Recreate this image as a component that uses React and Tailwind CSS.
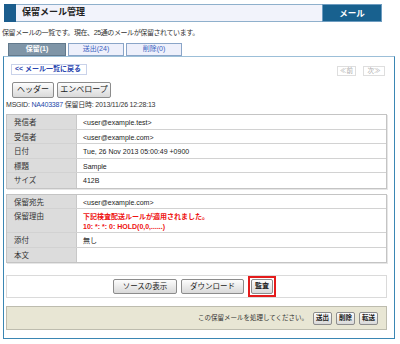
import React from "react";

const FONT = "font-['Liberation_Sans','Noto_Sans_CJK_JP',sans-serif]";

const BTN =
  "flex items-center justify-center rounded-[2px] border border-[#8c8c8c] bg-gradient-to-b from-[#fdfdfd] to-[#d9d9d9] text-[#222]";

const HEADERS = [
  ["発信者", "<user@example.test>"],
  ["受信者", "<user@example.com>"],
  ["日付", "Tue, 26 Nov 2013 05:00:49 +0900"],
  ["標題", "Sample"],
  ["サイズ", "412B"],
];

function Row({ label, children, h = "h-[14.5px]", last }) {
  return (
    <div className={`flex ${h} ${last ? "" : "border-b border-[#d2d2d2]"}`}>
      <div className="w-[70px] shrink-0 bg-[#dcdcdc] border-r border-[#c8c8c8] pl-[7px] pt-[3px] text-[7.5px] leading-[9px] text-[#333]">
        {label}
      </div>
      <div className="flex-1 bg-white pl-[6px] pt-[3px] text-[7px] leading-[9px] text-[#222]">{children}</div>
    </div>
  );
}

export default function App() {
  return (
    <div className={`w-[400px] h-[344px] bg-white overflow-hidden ${FONT}`}>
      {/* title bar */}
      <div className="mt-[4px] ml-[4px] flex h-[18px] w-[378px]">
        <div className="w-[12px] bg-[#1b5d8d]" />
        <div className="flex-1 flex items-center bg-[#f2f3fb] border-y border-[#8fb0cc] pl-[6px] text-[9px] font-bold text-[#222]">
          保留メール管理
        </div>
        <div className="w-[60px] flex items-center justify-center bg-[#18618f] border border-[#6d9cc0] text-[8.5px] font-bold text-white">
          メール
        </div>
      </div>

      <div className="mt-[6px] ml-[2px] text-[7px] leading-[9px] tracking-[-0.4px] text-[#333]">
        保留メールの一覧です。現在、25通のメールが保留されています。
      </div>

      {/* tabs */}
      <div className="mt-[6px] ml-[8px] flex gap-[2px] h-[13px] text-[7px]">
        <div className="w-[58px] flex items-center justify-center bg-[#7f95a7] border border-[#62798c] text-white font-bold">
          保留(1)
        </div>
        <div className="w-[56px] flex items-center justify-center bg-[#eef0fb] border border-[#8aa5c8] text-[#3a5fc0]">
          送出(24)
        </div>
        <div className="w-[56px] flex items-center justify-center bg-[#eef0fb] border border-[#8aa5c8] text-[#3a5fc0]">
          削除(0)
        </div>
      </div>

      {/* main box */}
      <div className="ml-[3px] w-[392px] h-[283px] border border-[#3a86b3] border-t-[#9cbfd8]">
        <div className="flex justify-between pt-[7px] pl-[7px] pr-[9px]">
          <div className="h-[11px] w-[76px] flex items-center border border-[#c9d2ea] px-[3px] text-[7px] font-bold text-[#2a45b0]">
            &lt;&lt; メール一覧に戻る
          </div>
          <div className="flex gap-[7px] mt-[2px]">
            <div className="h-[10px] w-[19px] flex items-center justify-center border border-[#dedede] text-[6.5px] text-[#aaa]">
              ≪前
            </div>
            <div className="h-[10px] w-[22px] flex items-center justify-center border border-[#dedede] text-[6.5px] text-[#aaa]">
              次≫
            </div>
          </div>
        </div>

        <div className="mt-[6px] ml-[8px] flex gap-[3px]">
          <div className={`${BTN} h-[16px] w-[42px] text-[8px]`}>ヘッダー</div>
          <div className={`${BTN} h-[16px] w-[54px] text-[8px]`}>エンベロープ</div>
        </div>

        <div className="mt-[2px] ml-[2px] text-[7px] leading-[9px] text-[#333] tracking-[-0.2px]">
          MSGID: <span className="text-[#2448a8]">NA403387</span> 保留日時: 2013/11/26 12:28:13
        </div>

        <div className="mt-[5px] ml-[2px] w-[381px] border border-[#c4c4c4] shadow-[1px_1px_0_#e6e6e6]">
          {HEADERS.map(([k, v], i) => (
            <Row key={k} label={k} last={i === HEADERS.length - 1}>
              {v}
            </Row>
          ))}
        </div>

        <div className="mt-[5px] ml-[2px] w-[381px] border border-[#c4c4c4] shadow-[1px_1px_0_#e6e6e6]">
          <Row label="保留宛先">&lt;user@example.com&gt;</Row>
          <Row label="保留理由" h="h-[24px]">
            <div className="text-[#ee1111] font-bold leading-[9.5px]">
              下記検査配送ルールが適用されました。
              <br />
              10: *: *: 0: HOLD(0,0,......)
            </div>
          </Row>
          <Row label="添付">無し</Row>
          <Row label="本文" last />
        </div>

        {/* action bar */}
        <div className="mt-[12px] ml-[2px] w-[381px] h-[23px] border border-[#dadada] flex items-center justify-center gap-[4px] pr-[4px]">
          <div className={`${BTN} h-[15px] w-[64px] text-[7.5px]`}>ソースの表示</div>
          <div className={`${BTN} h-[15px] w-[63px] text-[7.5px]`}>ダウンロード</div>
          <div className="border-2 border-[#e41b1b] p-[1px]">
            <div className={`${BTN} h-[15px] w-[22px] text-[7px] font-bold`}>監査</div>
          </div>
        </div>

        <div className="mt-[8px] ml-[2px] w-[381px] h-[24px] border border-[#bdbcae] bg-[#e8e6d4] flex items-center justify-end gap-[4px] pr-[8px] text-[6.5px] text-[#333]">
          <span className="mr-[1px]">この保留メールを処理してください。</span>
          <div className={`${BTN} h-[13px] w-[19px] text-[6.5px] font-bold`}>送出</div>
          <div className={`${BTN} h-[13px] w-[19px] text-[6.5px] font-bold`}>削除</div>
          <div className={`${BTN} h-[13px] w-[19px] text-[6.5px] font-bold`}>転送</div>
        </div>
      </div>
    </div>
  );
}
